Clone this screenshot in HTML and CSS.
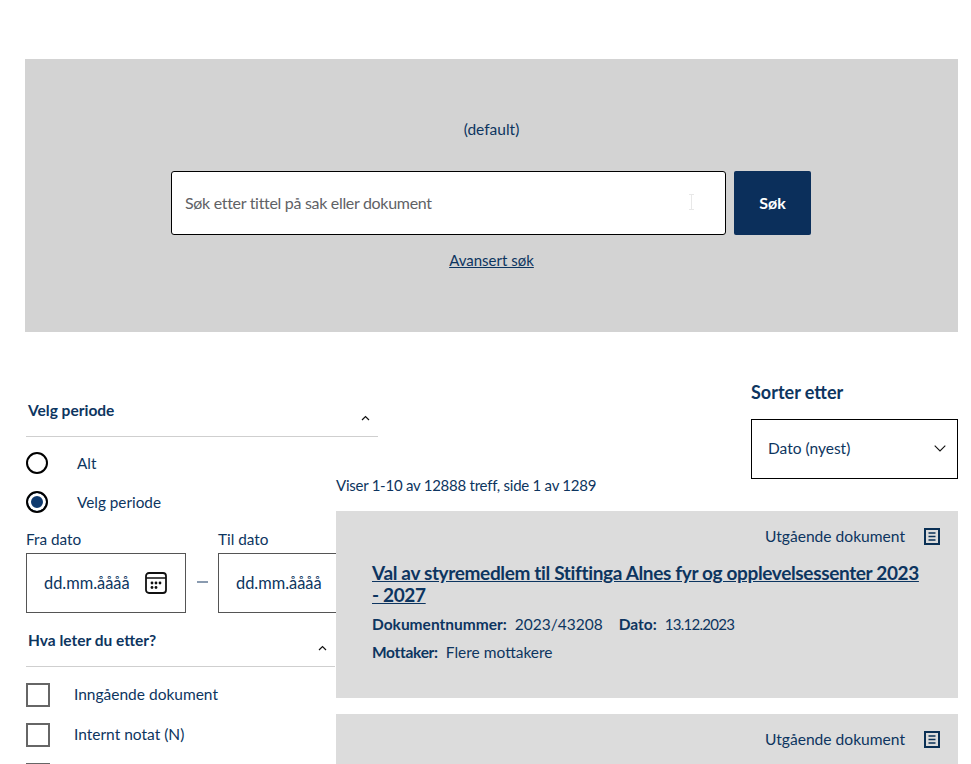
FILE: index.html
```html
<!DOCTYPE html>
<html lang="no">
<head>
<meta charset="utf-8">
<title>Søk</title>
<link rel="stylesheet" href="styles.css">
</head>
<body>
<section class="hero">
  <p class="hero-note">(default)</p>
  <form class="search">
    <div class="search-field">
      <input class="search-input" type="text" placeholder="Søk etter tittel på sak eller dokument">
      <svg class="cursor-icon" width="7" height="16" viewBox="0 0 7 16"><path d="M1 .5h5M1 15.5h5M3.500 .5v15" fill="none" stroke="#e8e8e8"/></svg>
    </div>
    <button class="search-button" type="button">Søk</button>
  </form>
  <a class="advanced" href="#">Avansert søk</a>
</section>
<div class="content">
  <aside class="filters">
    <div class="filter-head filter-head-wide">
      <h3>Velg periode</h3>
      <svg class="chev" width="9" height="6" viewBox="0 0 9 6"><path d="M1 5l3.500-3.500L8 5" fill="none" stroke="#111" stroke-width="1.2"/></svg>
    </div>
    <div class="radios">
      <label class="radio-row"><span class="radio"></span>Alt</label>
      <label class="radio-row"><span class="radio radio-on"></span>Velg periode</label>
    </div>
    <div class="dates">
      <div class="date">
        <span class="date-label">Fra dato</span>
        <div class="date-box">dd.mm.åååå
          <svg class="cal" width="22" height="22" viewBox="0 0 22 22"><rect x="1" y="1" width="20" height="20" rx="3" fill="none" stroke="#111" stroke-width="1.800"/><path d="M1 6h20" stroke="#111" stroke-width="1.500"/><g fill="#111"><circle cx="7" cy="11" r="1.400"/><circle cx="11" cy="11" r="1.400"/><circle cx="15" cy="11" r="1.400"/><circle cx="7" cy="15.500" r="1.400"/><circle cx="11" cy="15.500" r="1.400"/></g></svg>
        </div>
      </div>
      <span class="dash"></span>
      <div class="date">
        <span class="date-label">Til dato</span>
        <div class="date-box">dd.mm.åååå</div>
      </div>
    </div>
    <div class="filter-head filter-head-narrow">
      <h3>Hva leter du etter?</h3>
      <svg class="chev" width="9" height="6" viewBox="0 0 9 6"><path d="M1 5l3.500-3.500L8 5" fill="none" stroke="#111" stroke-width="1.2"/></svg>
    </div>
    <div class="checks">
      <label class="check-row"><span class="check"></span>Inngående dokument</label>
      <label class="check-row"><span class="check"></span>Internt notat (N)</label>
      <label class="check-row"><span class="check"></span></label>
    </div>
  </aside>
  <main class="results">
    <div class="sort">
      <h2>Sorter etter</h2>
      <div class="select">Dato (nyest)
        <svg width="12" height="7" viewBox="0 0 12 7"><path d="M.7.7L6 6l5.300-5.300" fill="none" stroke="#111" stroke-width="1.100"/></svg>
      </div>
    </div>
    <p class="count">Viser 1-10 av 12888 treff, side 1 av 1289</p>
    <article class="card">
      <div class="card-type">Utgående dokument
        <svg class="doc" width="16" height="17" viewBox="0 0 16 17"><rect x="1" y="1" width="14" height="15" fill="none" stroke="#0a3055" stroke-width="2"/><path d="M4.500 5h7M4.500 8.500h7M4.500 12h7" stroke="#0a3055" stroke-width="1.600"/></svg>
      </div>
      <h2 class="card-title"><a href="#">Val av styremedlem til Stiftinga Alnes fyr og opplevelsessenter 2023 - 2027</a></h2>
      <p class="meta"><b>Dokumentnummer:</b>2023/43208<b class="meta-gap">Dato:</b><span class="meta-date">13.12.2023</span></p>
      <p class="meta meta-short"><b>Mottaker:</b>Flere mottakere</p>
    </article>
    <article class="card">
      <div class="card-type">Utgående dokument
        <svg class="doc" width="16" height="17" viewBox="0 0 16 17"><rect x="1" y="1" width="14" height="15" fill="none" stroke="#0a3055" stroke-width="2"/><path d="M4.500 5h7M4.500 8.500h7M4.500 12h7" stroke="#0a3055" stroke-width="1.600"/></svg>
      </div>
    </article>
  </main>
</div>
</body>
</html>
```
FILE: styles.css
```css
* { box-sizing: border-box; }
html, body { height: 100%; overflow: hidden; }
body {
  margin: 0;
  padding: 59px 13px 0 25px;
  background: #fff;
  color: #0d3560;
  font-family: "Lato", "Liberation Sans", sans-serif;
  font-size: 15.500px;
  line-height: 20px;
}
h2, h3, p { margin: 0; }

.hero {
  height: 273px;
  background: #d3d3d3;
  display: flex;
  flex-direction: column;
  align-items: center;
  padding-top: 60px;
}
.search { display: flex; gap: 8px; margin: 32px 1px 0 0; }
.search-field { position: relative; }
.search-input {
  display: block;
  width: 555px;
  height: 64px;
  padding: 0 13px 2px;
  background: #fff;
  border: 1px solid #000;
  border-radius: 3px;
  font: inherit;
  font-size: 16px;
  letter-spacing: -0.31px;
  color: #0d3560;
}
.search-input::placeholder { color: #5f6266; opacity: 1; }
.cursor-icon { position: absolute; left: 517px; top: 23px; }
.search-button {
  width: 77px;
  height: 64px;
  padding: 0 0 2px;
  border: 0;
  border-radius: 2px;
  background: #0b2f5b;
  color: #fff;
  font: 700 16px "Lato", sans-serif;
}
.advanced { margin-top: 15px; color: #0d3560; text-decoration: underline; font-size: 15px; }

.content {
  display: grid;
  grid-template-columns: 311px 622px;
  margin-top: 48px;
}

.filters { padding: 20px 0 0 1px; min-width: 0; }
.filter-head {
  display: flex;
  justify-content: space-between;
  padding: 0 8px 0 2px;
  height: 37px;
  border-bottom: 1px solid #cfcfcf;
}
.filter-head h3 { font-size: 15.500px; font-weight: 700; line-height: 20px; }
.filter-head .chev { margin-top: 15px; }
.filter-head-wide { width: 352px; }
.filter-head-narrow { width: 309px; margin-top: 17px; }

.radios { display: flex; flex-direction: column; gap: 17px; padding-top: 15px; }
.radio-row { display: flex; align-items: center; gap: 29px; height: 22px; font-size: 15.300px; }
.radio { width: 22px; height: 22px; border: 2px solid #000; border-radius: 50%; background: #fff; }
.radio-on { background: #0f3a6e; box-shadow: inset 0 0 0 3px #fff; }

.dates { display: flex; width: 352px; gap: 10px; margin-top: 16px; align-items: flex-end; }
.date { display: flex; flex-direction: column; gap: 4px; flex: none; width: 160px; }
.date-label { font-size: 15.300px; }
.date-box {
  display: flex;
  align-items: center;
  justify-content: space-between;
  height: 60px;
  padding: 0 18px 0 17px;
  border: 1px solid #555;
  background: #fff;
  font-size: 16.400px;
}
.dash { width: 11px; height: 2px; margin: 0 0 30px 1px; background: #8a9bb0; }

.checks { display: flex; flex-direction: column; gap: 16px; padding-top: 16px; }
.check-row { display: flex; align-items: flex-start; gap: 24px; height: 24px; line-height: 22px; }
.check { flex: none; width: 24px; height: 24px; border: 2px solid #666; background: #fff; }

.results { position: relative; min-width: 0; }
.sort { width: 207px; margin-left: auto; }
.sort h2 { font-size: 18px; font-weight: 700; line-height: 24px; }
.select {
  display: flex;
  align-items: center;
  justify-content: space-between;
  height: 60px;
  margin-top: 15px;
  padding: 0 11px 2px 16px;
  border: 1px solid #000;
  background: #fff;
}
.count { margin-top: -4px; font-size: 15px; letter-spacing: -0.25px; }
.card {
  height: 187px;
  margin-top: 16px;
  padding: 14px 18px 0 36px;
  background: #dcdcdc;
}
.card-type {
  display: flex;
  justify-content: flex-end;
  align-items: center;
  gap: 19px;
  height: 22px;
  font-size: 15.600px;
}
.card-title {
  margin-top: 15px;
  padding-right: 20px;
  font-size: 19px;
  font-weight: 700;
  line-height: 22px;
  letter-spacing: -0.35px;
}
.card-title a { color: #0d3560; }
.meta { margin-top: 8px; }
.meta b { margin-right: 8px; }
.meta-gap { margin-left: 16px; }
.meta-date { font-size: 15px; letter-spacing: -0.7px; }
.meta-short b { letter-spacing: -0.3px; }
```
